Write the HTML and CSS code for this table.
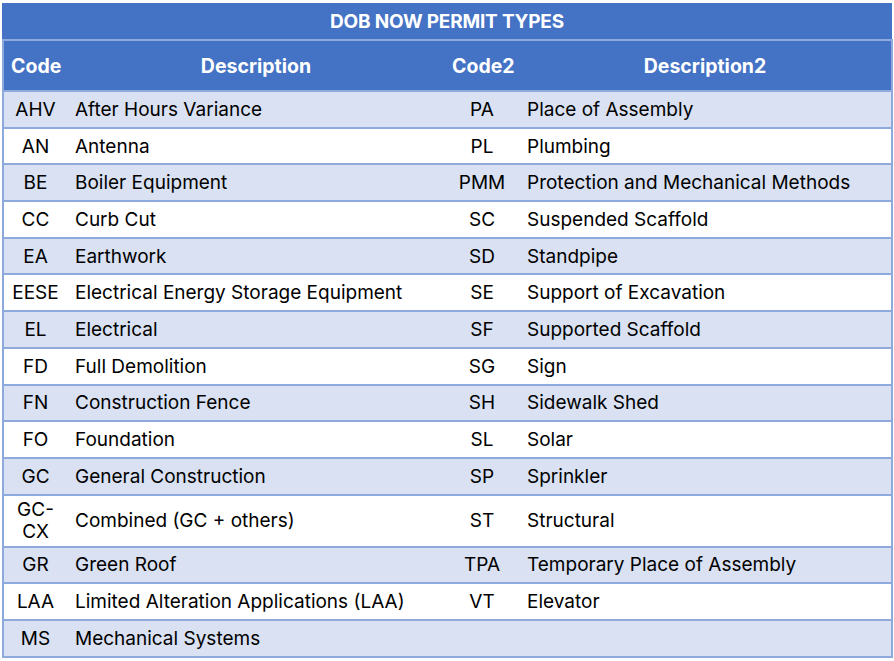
FILE: index.html
```html
<!DOCTYPE html>
<html lang="en">
<head>
<meta charset="utf-8">
<title>DOB NOW Permit Types</title>
<link rel="stylesheet" href="styles.css">
</head>
<body>
<div class="sheet">
  <div class="title">DOB NOW PERMIT TYPES</div>
  <div class="grid">
    <div class="row head">
      <div class="hc left">Code</div>
      <div class="hc center">Description</div>
      <div class="hc left">Code2</div>
      <div class="hc center">Description2</div>
    </div>
    <div class="row band"><div class="code">AHV</div><div class="desc">After Hours Variance</div><div class="code">PA</div><div class="desc">Place of Assembly</div></div>
    <div class="row"><div class="code">AN</div><div class="desc">Antenna</div><div class="code">PL</div><div class="desc">Plumbing</div></div>
    <div class="row band"><div class="code">BE</div><div class="desc">Boiler Equipment</div><div class="code">PMM</div><div class="desc">Protection and Mechanical Methods</div></div>
    <div class="row"><div class="code">CC</div><div class="desc">Curb Cut</div><div class="code">SC</div><div class="desc">Suspended Scaffold</div></div>
    <div class="row band"><div class="code">EA</div><div class="desc">Earthwork</div><div class="code">SD</div><div class="desc">Standpipe</div></div>
    <div class="row"><div class="code">EESE</div><div class="desc">Electrical Energy Storage Equipment</div><div class="code">SE</div><div class="desc">Support of Excavation</div></div>
    <div class="row band"><div class="code">EL</div><div class="desc">Electrical</div><div class="code">SF</div><div class="desc">Supported Scaffold</div></div>
    <div class="row"><div class="code">FD</div><div class="desc">Full Demolition</div><div class="code">SG</div><div class="desc">Sign</div></div>
    <div class="row band"><div class="code">FN</div><div class="desc">Construction Fence</div><div class="code">SH</div><div class="desc">Sidewalk Shed</div></div>
    <div class="row"><div class="code">FO</div><div class="desc">Foundation</div><div class="code">SL</div><div class="desc">Solar</div></div>
    <div class="row band"><div class="code">GC</div><div class="desc">General Construction</div><div class="code">SP</div><div class="desc">Sprinkler</div></div>
    <div class="row tall"><div class="code wrap">GC-<br>CX</div><div class="desc">Combined (GC + others)</div><div class="code">ST</div><div class="desc">Structural</div></div>
    <div class="row band"><div class="code">GR</div><div class="desc">Green Roof</div><div class="code">TPA</div><div class="desc">Temporary Place of Assembly</div></div>
    <div class="row"><div class="code">LAA</div><div class="desc">Limited Alteration Applications (LAA)</div><div class="code">VT</div><div class="desc">Elevator</div></div>
    <div class="row band"><div class="code">MS</div><div class="desc">Mechanical Systems</div><div class="code"></div><div class="desc"></div></div>
  </div>
</div>
</body>
</html>
```
FILE: styles.css
```css
html, body {
  margin: 0;
  padding: 0;
  background: #ffffff;
}

body {
  font-family: Inter, "Open Sans", "Liberation Sans", sans-serif;
  color: #000000;
}

.sheet {
  margin: 3px 0 0 2px;
  width: 891px;
}

.title {
  height: 36px;
  width: 890px;
  background: #4472c4;
  color: #ffffff;
  font-weight: 700;
  font-size: 19px;
  display: flex;
  align-items: center;
  justify-content: center;
  letter-spacing: -0.2px;
}

.grid {
  border: 2px solid #8ea9db;
  border-bottom: none;
}

.row {
  display: grid;
  grid-template-columns: 63px 378px 74px 1fr;
  height: 34.7px;
  border-bottom: 2px solid #8ea9db;
  background: #ffffff;
  font-size: 19px;
  align-items: center;
}

.row.band {
  background: #d9e1f2;
}

.row.tall {
  height: 50px;
}

.row.head {
  height: 49px;
  background: #4472c4;
  color: #ffffff;
  font-weight: 700;
  font-size: 19.5px;
}

.hc.left {
  padding-left: 7px;
}

.hc.center {
  text-align: center;
}

.code {
  text-align: center;
  white-space: nowrap;
}

.code.wrap {
  line-height: 22px;
}

.desc {
  padding-left: 8px;
  white-space: nowrap;
}
```
